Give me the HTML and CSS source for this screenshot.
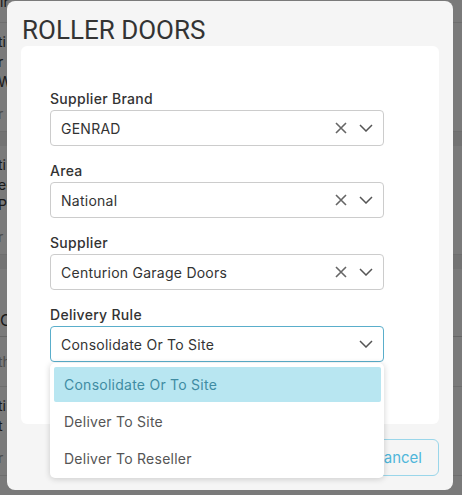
FILE: index.html
```html
<!DOCTYPE html>
<html>
<head>
<meta charset="utf-8">
<link rel="stylesheet" href="styles.css">
</head>
<body>
<div class="page">
  <div class="bg-row bg-first"><span class="bg-cut">ır</span></div>
  <div class="bg-group">
    <div class="bg-line">ti</div>
    <div class="bg-line">r</div>
    <div class="bg-line">W</div>
    <div class="bg-line bg-muted">r</div>
  </div>
  <div class="bg-band"></div>
  <div class="bg-group">
    <div class="bg-line">ti</div>
    <div class="bg-line">ee</div>
    <div class="bg-line">Pe</div>
    <div class="bg-line bg-muted">r</div>
  </div>
  <div class="bg-band"></div>
  <div class="bg-gap"></div>
  <div class="bg-head">C</div>
  <div class="bg-line bg-muted bg-single">th</div>
  <div class="bg-group">
    <div class="bg-line">ti</div>
    <div class="bg-line">t</div>
    <div class="bg-line bg-muted">r</div>
  </div>
</div>
<div class="backdrop"></div>
<div class="modal">
  <h1 class="title">ROLLER DOORS</h1>
  <div class="card">
    <div class="form">
      <div class="field">
        <label class="label">Supplier Brand</label>
        <div class="select">
          <span class="value">GENRAD</span>
          <span class="icons">
            <svg class="icon-x" width="12" height="12" viewBox="0 0 12 12"><path d="M1 1L11 11M11 1L1 11" stroke="#666" stroke-width="1.6" fill="none"/></svg>
            <svg class="icon-chev" width="14" height="8" viewBox="0 0 14 8"><path d="M1 1L7 7L13 1" stroke="#555" stroke-width="1.5" fill="none"/></svg>
          </span>
        </div>
      </div>
      <div class="field">
        <label class="label">Area</label>
        <div class="select">
          <span class="value">National</span>
          <span class="icons">
            <svg class="icon-x" width="12" height="12" viewBox="0 0 12 12"><path d="M1 1L11 11M11 1L1 11" stroke="#666" stroke-width="1.6" fill="none"/></svg>
            <svg class="icon-chev" width="14" height="8" viewBox="0 0 14 8"><path d="M1 1L7 7L13 1" stroke="#555" stroke-width="1.5" fill="none"/></svg>
          </span>
        </div>
      </div>
      <div class="field">
        <label class="label">Supplier</label>
        <div class="select">
          <span class="value">Centurion Garage Doors</span>
          <span class="icons">
            <svg class="icon-x" width="12" height="12" viewBox="0 0 12 12"><path d="M1 1L11 11M11 1L1 11" stroke="#666" stroke-width="1.6" fill="none"/></svg>
            <svg class="icon-chev" width="14" height="8" viewBox="0 0 14 8"><path d="M1 1L7 7L13 1" stroke="#555" stroke-width="1.5" fill="none"/></svg>
          </span>
        </div>
      </div>
      <div class="field">
        <label class="label">Delivery Rule</label>
        <div class="select-wrap">
          <div class="select select-open">
            <span class="value">Consolidate Or To Site</span>
            <span class="icons">
              <svg class="icon-chev" width="14" height="8" viewBox="0 0 14 8"><path d="M1 1L7 7L13 1" stroke="#555" stroke-width="1.5" fill="none"/></svg>
            </span>
          </div>
          <div class="menu">
            <div class="option option-active">Consolidate Or To Site</div>
            <div class="option">Deliver To Site</div>
            <div class="option">Deliver To Reseller</div>
          </div>
        </div>
      </div>
    </div>
  </div>
  <div class="footer">
    <button class="btn-cancel">Cancel</button>
  </div>
</div>
</body>
</html>
```
FILE: styles.css
```css
* { box-sizing: border-box; }
html, body { margin: 0; padding: 0; }
body {
  width: 462px;
  height: 495px;
  overflow: hidden;
  position: relative;
  font-family: "Inter", "Noto Sans", sans-serif;
  background: #f4f4f4;
}
.page {
  width: 462px;
  font-size: 14px;
  color: #333;
}
.bg-row { height: 26px; border-bottom: 1px solid #ddd; }
.bg-cut { display: block; line-height: 10px; margin-top: -3px; }
.bg-group { padding: 10px 0 8px; border-bottom: 1px solid #ddd; }
.bg-line { line-height: 18px; height: 18px; margin-left: -2px; }
.bg-line + .bg-line { margin-top: 2px; }
.bg-muted { color: #999; margin-top: 14px !important; }
.bg-band { height: 14px; background: #e6e6e6; }
.bg-gap { height: 40px; }
.bg-head { line-height: 22px; height: 28px; font-size: 16px; border-bottom: 1px solid #ccc; }
.bg-single { height: 50px; line-height: 50px; margin-top: 0 !important; border-bottom: 1px solid #ddd; }
.backdrop {
  position: absolute;
  inset: 0;
  background: rgba(0, 0, 0, 0.5);
}
.modal {
  position: absolute;
  left: 7px;
  top: 1px;
  width: 446px;
  height: 489px;
  background: #f5f5f5;
  border-radius: 8px;
  padding: 13px 14px 14px;
  display: flex;
  flex-direction: column;
}
.title {
  margin: 0 0 0 1px;
  font-family: "Roboto", "Inter", sans-serif;
  font-size: 26px;
  line-height: 32px;
  font-weight: 400;
  color: #333;
}
.card {
  flex: 1;
  background: #fff;
  border-radius: 6px;
  padding: 42px 55px 0 29px;
}
.form { display: flex; flex-direction: column; gap: 14px; }
.field { display: flex; flex-direction: column; gap: 1px; }
.label {
  font-size: 14px;
  line-height: 21px;
  font-weight: 500;
  letter-spacing: 0.3px;
  color: #333;
}
.select-wrap { position: relative; }
.select {
  height: 36px;
  border: 1px solid #ccc;
  border-radius: 4px;
  display: flex;
  align-items: center;
  padding: 0 10px;
  font-size: 14px;
  letter-spacing: 0.25px;
  color: #333;
  background: #fff;
}
.select-open { border-color: #5aaecb; }
.value { flex: 1; }
.icons { display: flex; align-items: center; gap: 12px; }
.icon-x { display: block; }
.icon-chev { display: block; }
.menu {
  position: absolute;
  z-index: 5;
  top: calc(100% + 1px);
  left: 0;
  right: 0;
  background: #fff;
  border-radius: 5px;
  padding: 4px 3px 2px 4px;
  box-shadow: 0 1px 6px rgba(0, 0, 0, 0.18);
}
.option {
  height: 35px;
  line-height: 35px;
  margin-bottom: 2px;
  padding-left: 10px;
  font-size: 14px;
  letter-spacing: 0.25px;
  color: #555;
  border-radius: 2px;
}
.option:last-child { margin-bottom: 0; }
.option-active { background: #b8e6f1; color: #3f8ca3; }
.footer {
  display: flex;
  justify-content: flex-end;
  margin-top: 15px;
}
.btn-cancel {
  height: 37px;
  padding: 0 16px;
  border: 1px solid #9ad6ea;
  border-radius: 6px;
  background: transparent;
  font-family: inherit;
  font-size: 15px;
  color: #4fb6da;
}
```
